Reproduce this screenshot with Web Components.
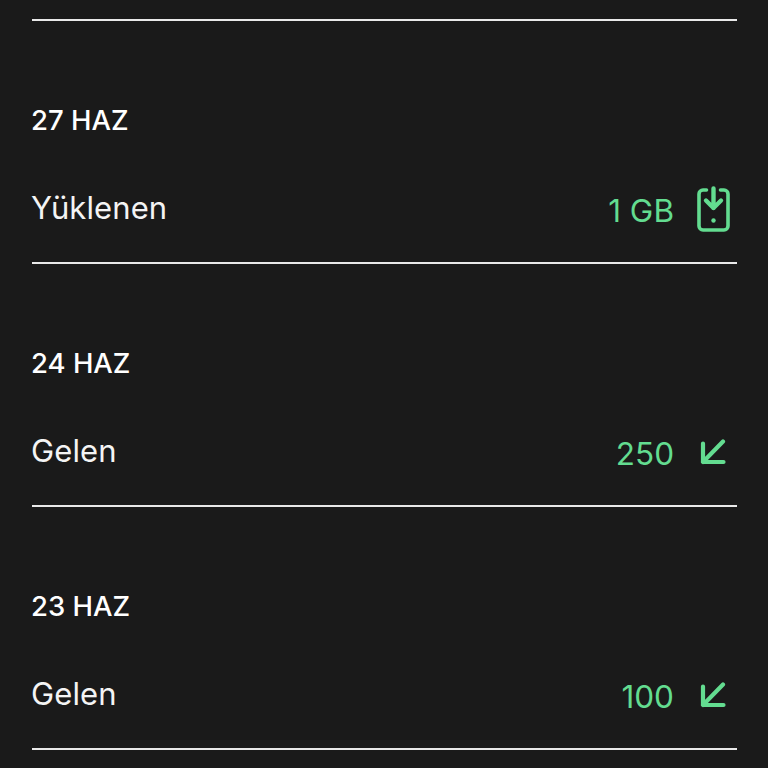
<!DOCTYPE html>
<html lang="tr">
<head>
<meta charset="utf-8">
<title>Hareketler</title>
<style>
  html, body { margin: 0; background: #1a1a1a; }
  body { height: 768px; overflow: hidden; font-family: Inter, "Liberation Sans", sans-serif; }
</style>
</head>
<body>
<history-list>
  <history-item date="27 HAZ" label="Yüklenen" amount="1 GB" icon="topup"></history-item>
  <history-item date="24 HAZ" label="Gelen" amount="250" icon="incoming"></history-item>
  <history-item date="23 HAZ" label="Gelen" amount="100" icon="incoming"></history-item>
</history-list>

<script>
const ICONS = {
  topup: `<svg width="33" height="46" viewBox="0 0 33 46" fill="none" stroke="currentColor" stroke-width="3.600" stroke-linecap="round" stroke-linejoin="round">
      <path d="M9.500 4H6A4 4 0 0 0 2 8V40A4 4 0 0 0 6 44H27A4 4 0 0 0 31 40V8A4 4 0 0 0 27 4H23.500"/>
      <path stroke-width="4.400" d="M16.500 2.500V22M9 14.500L16.500 22L24 14.500"/>
      <circle cx="16.500" cy="34.500" r="2.200" fill="currentColor" stroke="none"/>
    </svg>`,
  incoming: `<svg width="26" height="26" viewBox="0 0 26 26" fill="none" stroke="currentColor" stroke-width="4.200" stroke-linecap="round" stroke-linejoin="round">
      <path d="M23 2.500L3 23M3 4.500V23H23.500"/>
    </svg>`
};

class HistoryList extends HTMLElement {
  constructor() {
    super();
    this.attachShadow({ mode: "open" });
    this.shadowRoot.innerHTML = `
      <style>
        :host { display: block; padding: 0 31px 0 32px; }
        #top { height: 19px; border-bottom: 2px solid #e9e9e9; }
      </style>
      <div id="top"></div>
      <slot></slot>
    `;
  }
}
customElements.define("history-list", HistoryList);

class HistoryItem extends HTMLElement {
  constructor() {
    super();
    this.attachShadow({ mode: "open" });
    const icon = ICONS[this.getAttribute("icon")] || "";
    this.shadowRoot.innerHTML = `
      <style>
        :host {
          display: flex;
          flex-direction: column;
          box-sizing: border-box;
          height: 243px;
          padding-top: 80px;
          border-bottom: 2px solid #e9e9e9;
          color: #fff;
        }
        #date { font-size: 27.500px; line-height: 38px; font-weight: 450; margin-left: -1px; }
        #row {
          display: flex;
          align-items: center;
          justify-content: space-between;
          margin-top: 45px;
          height: 50px;
          margin-right: 1px;
        }
        #label { font-size: 31px; line-height: 44px; letter-spacing: 0.1px; color: #f4f4f4; margin-top: -2px; margin-left: -1px; }
        #value { display: flex; align-items: center; color: #63dc90; }
        #amount { font-size: 31.500px; line-height: 44px; margin-top: 4px; }
        #icon { display: flex; justify-content: center; width: 46px; margin-left: 16px; }
        svg { display: block; }
      </style>
      <div id="date">${this.getAttribute("date")}</div>
      <div id="row">
        <span id="label">${this.getAttribute("label")}</span>
        <span id="value">
          <span id="amount">${this.getAttribute("amount")}</span>
          <span id="icon">${icon}</span>
        </span>
      </div>
    `;
  }
}
customElements.define("history-item", HistoryItem);
</script>
</body>
</html>
